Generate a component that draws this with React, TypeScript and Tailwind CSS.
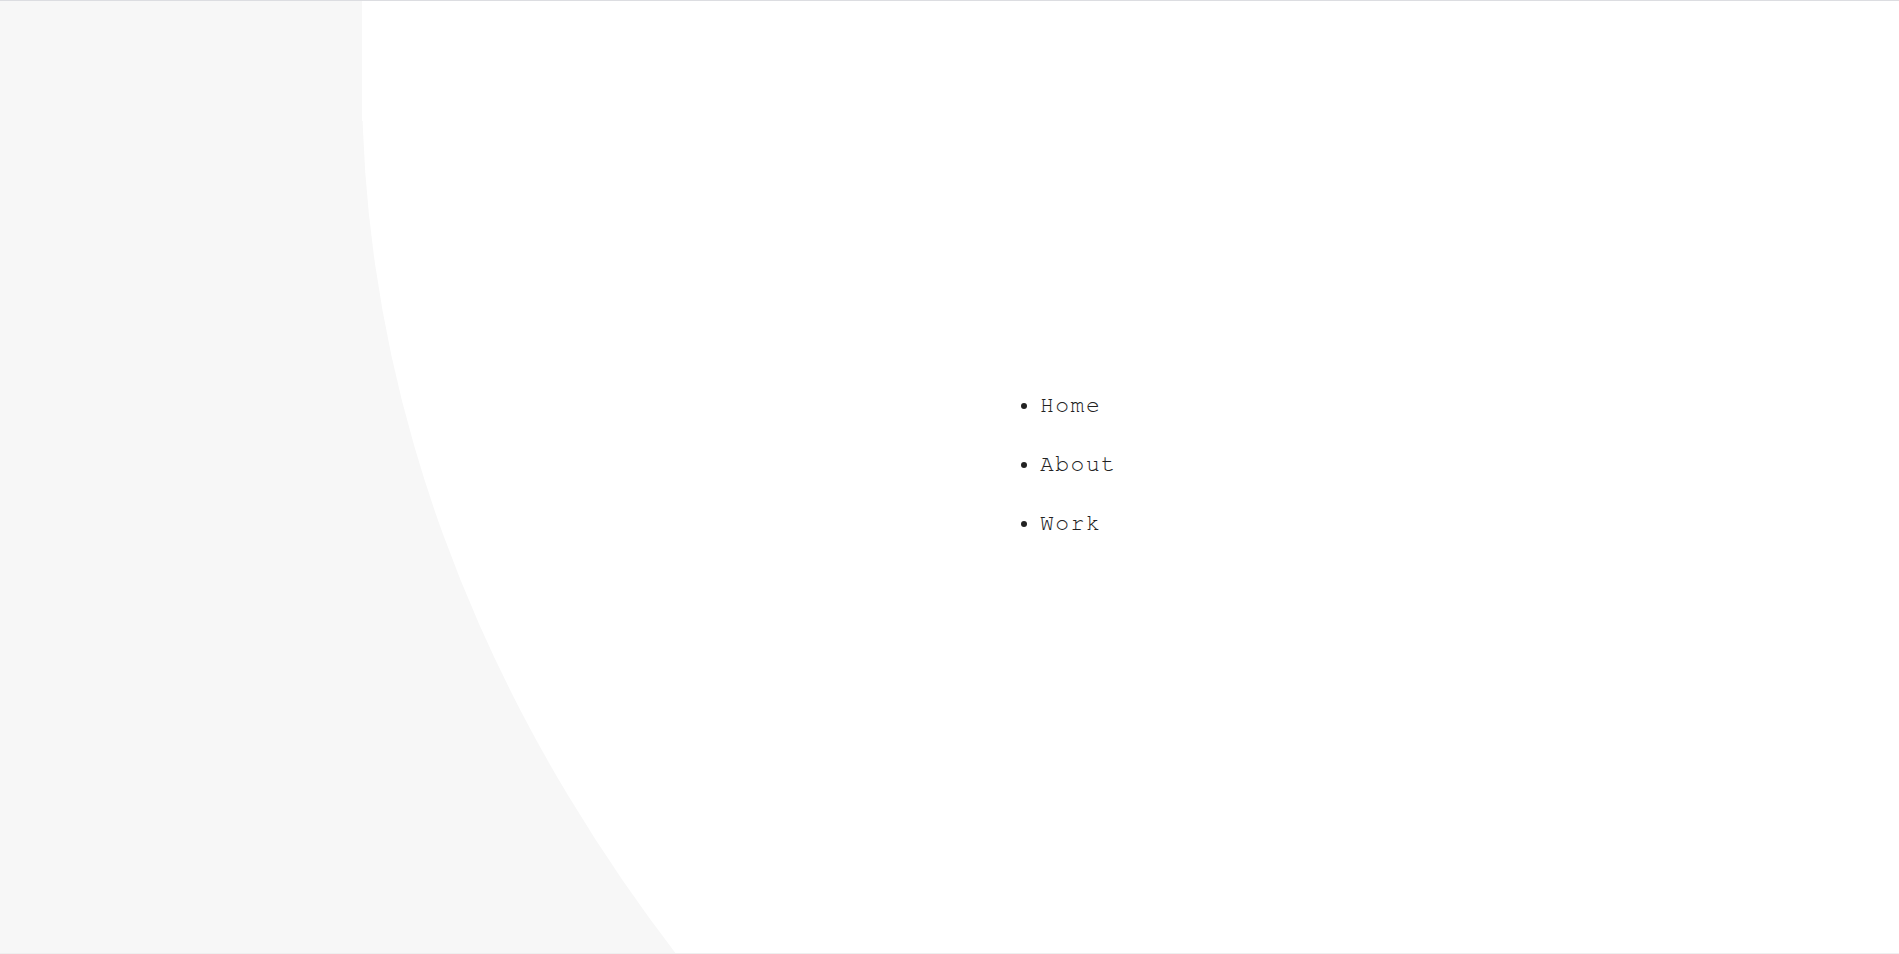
import React from "react";

export default function App() {
  return (
    <div className="relative h-[954px] w-full overflow-hidden bg-[#f7f7f7] border-t border-[#dcdde1]">
      {/* white curved panel (decorative background) */}
      <div className="absolute left-[362px] right-0 top-0 h-[120px] bg-white" />
      <div className="absolute left-[362px] top-[-1790px] w-[5432px] h-[3740px] rounded-[50%] bg-white" />
      <div className="absolute left-0 right-0 bottom-0 h-px bg-[#efefef]" />

      <nav className="relative flex pl-[1000px] pt-[375px]">
        <ul
          className="list-disc pl-[40px] text-[23px] leading-[59px] tracking-[1.5px] text-[#222]"
          style={{
            fontFamily:
              '"Nimbus Mono PS", "Nimbus Mono L", FreeMono, Courier, "Liberation Mono", monospace',
          }}
        >
          <li>Home</li>
          <li>About</li>
          <li>Work</li>
        </ul>
      </nav>
    </div>
  );
}
